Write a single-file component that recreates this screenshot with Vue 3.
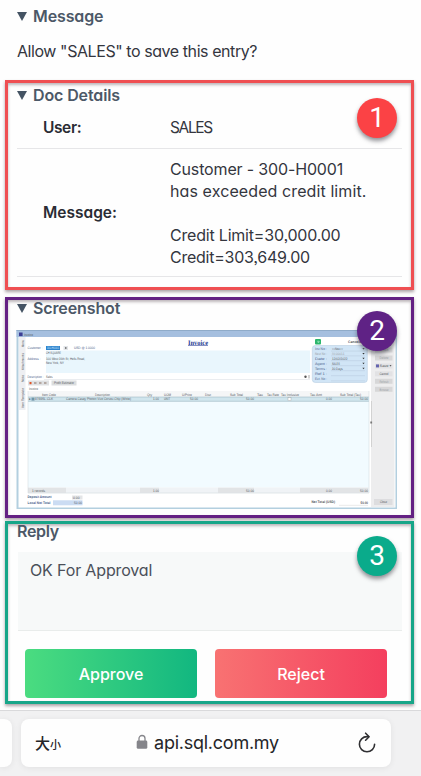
<script setup>
const docLines = [
  { text: 'Customer - 300-H0001', cls: 'l1' },
  { text: 'has exceeded credit limit.', cls: 'l2' },
  { text: '\u00a0', cls: '' },
  { text: 'Credit Limit=30,000.00', cls: 'l3' },
  { text: 'Credit=303,649.00', cls: 'l4' },
]
const fields = [
  { label: 'Inv No :', value: '<<New>>', y: 350.2 },
  { label: 'Next No :', value: 'IV-00011', y: 355, dim: true },
  { label: 'Date :', value: '12/02/2022', y: 359.8 },
  { label: 'Agent :', value: 'SALES', y: 364.8 },
  { label: 'Terms :', value: '30 Days', y: 369.8 },
  { label: 'Ref 1 :', value: '', y: 374.8 },
  { label: 'Ext. No :', value: '', y: 380 },
]
// Every label of the invoice window: t = text, x/y = baseline start, w = width, c = class
const labels = [
  { t: 'Invoice', x: 24, y: 336, w: 9 },
  { t: '300-H0001', x: 47, y: 349.3, w: 12, c: 'lit' },
  { t: 'Customer :', x: 27.5, y: 349.4, w: 15, c: 'blue' },
  { t: 'USD @ 1.0000', x: 74, y: 349.4, w: 21, c: 'blue' },
  { t: 'CH SQUARE', x: 46, y: 354.4, w: 15 },
  { t: 'Address :', x: 27.5, y: 359.5, w: 13, c: 'blue' },
  { t: '100 West 36th St, Hells Road,', x: 46, y: 359.6, w: 39 },
  { t: 'New York, NY', x: 46, y: 364.2, w: 18 },
  { t: 'Description :', x: 27.5, y: 378.2, w: 16, c: 'blue' },
  { t: 'Sales', x: 46, y: 378.2, w: 6.5 },
  { t: 'Profit Estimator', x: 54, y: 384.3, w: 20 },
  { t: 'Invoice', x: 29, y: 389.6, w: 9 },
  { t: 'Item Code', x: 42, y: 395.6, w: 14 },
  { t: 'Description', x: 95, y: 395.6, w: 15 },
  { t: 'Qty', x: 147, y: 395.6, w: 5 },
  { t: 'UOM', x: 164, y: 395.6, w: 7 },
  { t: 'U/Price', x: 182, y: 395.6, w: 10 },
  { t: 'Disc', x: 205, y: 395.6, w: 6 },
  { t: 'Sub Total', x: 230, y: 395.6, w: 13 },
  { t: 'Tax', x: 257, y: 395.6, w: 6 },
  { t: 'Tax Rate', x: 267, y: 395.6, w: 12 },
  { t: 'Tax Inclusive', x: 281, y: 395.6, w: 18 },
  { t: 'Tax Amt', x: 310, y: 395.6, w: 12 },
  { t: 'Sub Total (Tax)', x: 340, y: 395.6, w: 21 },
  { t: '▸', x: 29, y: 400.3, w: 2 },
  { t: '8789SL-CLK', x: 35, y: 400.3, w: 18 },
  { t: 'Camera Casey Photon Vivo Corvex Chip (White)', x: 66, y: 400.3, w: 65 },
  { t: '1.00', x: 153, y: 400.3, w: 6 },
  { t: 'UNIT', x: 164, y: 400.3, w: 6 },
  { t: '50.00', x: 190, y: 400.3, w: 8 },
  { t: '50.00', x: 246, y: 400.3, w: 8 },
  { t: '0.00', x: 326, y: 400.3, w: 6 },
  { t: '50.00', x: 360, y: 400.3, w: 8 },
  { t: '1 records', x: 32, y: 491.5, w: 13 },
  { t: '1.00', x: 153, y: 491.5, w: 6 },
  { t: '50.00', x: 246, y: 491.5, w: 8 },
  { t: '0.00', x: 326, y: 491.5, w: 6 },
  { t: '50.00', x: 360, y: 491.5, w: 8 },
  { t: 'Deposit Amount', x: 27.5, y: 498.3, w: 24, c: 'blue strong' },
  { t: 'Local Net Total', x: 27.5, y: 503.6, w: 23, c: 'blue strong' },
  { t: '0.00', x: 73, y: 498.9, w: 6.5 },
  { t: '50.00', x: 74, y: 504.2, w: 8 },
  { t: 'Net Total (USD)', x: 311.5, y: 503.2, w: 23.5, c: 'strong' },
  { t: '50.00', x: 360.5, y: 504, w: 7.5, c: 'strong' },
  { t: 'Close', x: 380, y: 503.3, w: 7 },
  { t: 'Cancelled', x: 348, y: 343, w: 16, c: 'strong' },
]
const tabs = [
  { t: 'Menu', y: 347, w: 7 }, { t: 'Attachments', y: 370, w: 17 },
  { t: 'Note', y: 382, w: 7 }, { t: 'Item Template', y: 408, w: 20 },
]
const buttons = [
  { t: 'Edit', y: 347.5, dim: true }, { t: 'Delete', y: 355.5, dim: true },
  { t: 'Save', y: 363.5 }, { t: 'Cancel', y: 371.3 },
  { t: 'Refresh', y: 378.8, dim: true }, { t: 'Browse', y: 386.8, dim: true },
]
</script>

<template>
  <main class="page">
    <section class="intro">
      <h2 class="heading"><i class="caret"></i><span>Message</span></h2>
      <p class="question">Allow "SALES" to save this entry?</p>
    </section>

    <section class="frame red">
      <h2 class="heading"><i class="caret"></i><span>Doc Details</span></h2>
      <div class="row user">
        <b class="k-user">User:</b><span class="v-user">SALES</span>
      </div>
      <div class="row message">
        <b class="k-msg">Message:</b>
        <div><p v-for="(l, i) in docLines" :key="i"><span :class="l.cls">{{ l.text }}</span></p></div>
      </div>
      <span class="badge">1</span>
    </section>

    <section class="frame purple">
      <h2 class="heading"><i class="caret"></i><span>Screenshot</span></h2>
      <svg class="shot" viewBox="16 330 382 180" width="382" height="180">
        <rect x="16.5" y="330" width="380.5" height="179" fill="#b3cfdf" />
        <rect x="18.5" y="337" width="377" height="170.5" fill="#fff" />
        <rect x="16.5" y="330" width="380.5" height="7" fill="#a5bfdf" />
        <rect x="16.5" y="330" width="380.5" height="1" fill="#8fabc9" />
        <rect x="19" y="332.5" width="3.6" height="3.6" fill="#3d3f95" />
        <rect x="19" y="337" width="6.5" height="73" fill="#eeeff2" />
        <text v-for="t in tabs" :key="t.t" :transform="`translate(23.5 ${t.y}) rotate(-90)`" :textLength="t.w" lengthAdjust="spacingAndGlyphs">{{ t.t }}</text>
        <text class="title" x="188" y="344.7" textLength="20" lengthAdjust="spacingAndGlyphs">Invoice</text>
        <rect x="188" y="345.4" width="20" height=".6" fill="#34469b" />

        <rect x="46" y="350.5" width="264" height="22.5" fill="#e9f6fd" />
        <rect x="46" y="346" width="14" height="4" fill="#2d83cd" />
        <rect x="63.5" y="346" width="4.5" height="4" fill="#e2e5e9" />
        <rect x="65" y="347.4" width="1.5" height="1.2" fill="#444" />
        <path d="M44 379.5H310" stroke="#d7dbe0" stroke-width=".5" />
        <circle cx="305.5" cy="376.8" r="1.2" fill="#555" />
        <rect x="308" y="375" width="2" height="3.5" fill="#d3d3d3" />

        <rect x="28" y="380.5" width="21" height="5" fill="#dfe1e3" />
        <rect x="29.5" y="382" width="2" height="2.2" fill="#e05528" />
        <path d="M34 383h2.5m2.5 0h2.5m2.5 0h2.5" stroke="#a7958d" stroke-width="1.6" />
        <rect x="51.5" y="380.5" width="25" height="5" fill="#dcdedf" />

        <rect x="28" y="391" width="341" height="6" fill="#f5f6f7" />
        <rect x="28" y="401" width="341" height="86.5" fill="#f2fbff" />
        <rect x="28" y="397" width="341" height="4.4" fill="#d0e5ed" />
        <path d="M28 397H369M28 401.3H369" stroke="#93aeb9" stroke-width=".5" />
        <rect x="31.5" y="397.6" width="3" height="3" fill="#7196a9" />
        <rect x="288" y="397.7" width="3" height="3" fill="#fff" stroke="#999" stroke-width=".4" />

        <rect x="28" y="487.5" width="341" height="5.7" fill="#f0f3f6" />
        <path d="M28 490.3H66M140 490.3H159M218 490.3H254M300 490.3H368" stroke="#e2e4e6" stroke-width="5" />
        <path d="M28 391V493H369V391" fill="none" stroke="#cdd4da" stroke-width=".5" />
        <rect x="72" y="495.5" width="10.5" height="4" fill="#e4e5e7" />
        <rect x="53" y="500.3" width="29.5" height="5" fill="#cbdcf3" />
        <path d="M339 505.3H368" stroke="#d2d2d2" stroke-width=".5" />

        <rect x="371" y="337" width="23.5" height="170" fill="#ededee" />
        <path d="M371.5 401V447" stroke="#d2d2d2" stroke-width="1" />
        <rect x="370.3" y="421.5" width="1.8" height="2" fill="#777" />
        <g v-for="b in buttons" :key="b.t">
          <rect x="375" :y="b.y" width="17.5" height="5" :fill="b.dim ? '#d7d7d8' : '#e2e2e4'" />
          <text x="379.5" :y="b.y + 3.7" textLength="9" :class="{ faint: b.dim }" lengthAdjust="spacingAndGlyphs">{{ b.t }}</text>
        </g>
        <rect x="376" y="364.4" width="3" height="3" fill="#6464ae" />
        <path d="M389.5 365.2h2l-1 1.4z" fill="#333" />
        <rect x="374" y="499" width="18.5" height="6" fill="#dddddf" />

        <rect x="315" y="339" width="6" height="5.6" rx="1" fill="#2db66d" />
        <path d="M317 341.8h2.2m-1-1.2 1.1 1.2-1.1 1.2" stroke="#d8ffe9" stroke-width=".5" fill="none" />
        <rect x="312.3" y="345.5" width="55" height="37" rx="3" fill="#d1e5f6" stroke="#b9cfe2" stroke-width=".6" />
        <g v-for="f in fields" :key="f.label">
          <path :d="`M331 ${f.y + .9}H365`" stroke="#adc3d7" stroke-width=".4" />
          <text class="blue" :class="{ faint: f.dim }" x="315" :y="f.y" textLength="12" lengthAdjust="spacingAndGlyphs">{{ f.label }}</text>
          <text v-if="f.value" :class="{ faint: f.dim }" x="332" :y="f.y" :textLength="f.value.length * 1.55" lengthAdjust="spacingAndGlyphs">{{ f.value }}</text>
          <path v-if="f.value" :d="`M362.4 ${f.y - 2}h2.2l-1.1 1.4z`" fill="#333" />
        </g>
        <text v-for="(l, i) in labels" :key="i" :class="l.c" :x="l.x" :y="l.y" :textLength="l.w" lengthAdjust="spacingAndGlyphs">{{ l.t }}</text>
      </svg>
      <span class="badge">2</span>
    </section>

    <section class="frame green">
      <h2 class="heading reply"><span>Reply</span></h2>
      <div class="answer"><span>OK For Approval</span></div>
      <div class="actions">
        <button class="approve"><span>Approve</span></button>
        <button class="reject"><span>Reject</span></button>
      </div>
      <span class="badge">3</span>
    </section>

    <footer class="bar">
      <div class="stub"></div>
      <div class="pill">
        <span class="size">大<small>小</small></span>
        <span class="host">
          <svg width="12" height="16" viewBox="0 0 12 16">
            <path d="M3 7V4.5a3 3 0 0 1 6 0V7" fill="none" stroke="#85858a" stroke-width="1.3" />
            <rect x=".7" y="6.6" width="10.6" height="8.2" rx="1.4" fill="#85858a" />
          </svg>
          <span>api.sql.com.my</span>
        </span>
        <svg width="20" height="22" viewBox="0 0 20 22">
          <path d="M11.4 4.6H10A7.6 7.6 0 1 0 17.6 12.2" fill="none" stroke="#303033" stroke-width="1.6" stroke-linecap="round" />
          <path d="M8.6 1.2 12.1 4.7 8.6 8.2" fill="none" stroke="#303033" stroke-width="1.6" stroke-linecap="round" stroke-linejoin="round" />
        </svg>
      </div>
    </footer>
  </main>
</template>

<style>
body { margin: 0; background: #fefefe; }
</style>

<style scoped>
.page {
  box-sizing: border-box;
  height: 776px;
  width: 421px;
  overflow: hidden;
  display: flex;
  flex-direction: column;
  font-family: Inter, "Noto Sans", sans-serif;
  font-feature-settings: "cv11", "ss03";
  font-size: 16px;
  line-height: 22px;
  color: #34363e;
  background: #fefefe;
}
p, h2 { margin: 0; }
span { white-space: nowrap; }
.intro { height: 76px; padding: 5px 0 0 16px; }
.heading { display: flex; align-items: center; height: 22px; font-size: 16px; font-weight: 600; color: #4c5867; letter-spacing: -.12px; }
.caret { width: 0; border: 5px solid transparent; border-top: 9px solid #445363; border-bottom: 0; margin: 0 6.5px 0 .5px; }
.question { margin-top: 13px; padding-left: 1px; letter-spacing: -.43px; }
.frame { position: relative; box-sizing: border-box; width: 409px; margin-left: 5px; border: 3px solid; flex: none; box-shadow: 0 2px 3px rgba(70, 50, 60, .45), inset 0 2px 3px rgba(70, 50, 60, .35); }
.frame .heading { padding-left: 8px; }
.red { height: 210px; border-color: #ef4f52; padding-top: 1px; }
.purple { height: 221px; border-color: #642083; margin-top: 7px; }
.green { height: 183px; border-color: #18a689; margin-top: 3px; }
.row { box-sizing: border-box; display: grid; grid-template-columns: 127px 1fr; align-items: center; margin: 0 9px; padding-left: 26px; border-bottom: 1px solid #e6e6e8; }
.row b { font-weight: 600; font-size: 15.5px; color: #2a2c34; }
.row .k-user { letter-spacing: -.4px; }
.row .k-msg { letter-spacing: 0; }
.v-user { font-size: 15.5px; letter-spacing: -1.35px; }
.l1 { letter-spacing: -.15px; }
.l2 { letter-spacing: .1px; }
.l3 { letter-spacing: -.2px; }
.l4 { letter-spacing: -.25px; }
.user { height: 43px; padding-top: 2px; }
.message { height: 128px; }
.purple .heading { margin-top: -3px; }
.shot { display: block; margin: 11px 0 0 8px; letter-spacing: 0; }
.shot text { font-family: "Liberation Sans", sans-serif; font-size: 3.5px; fill: #53585e; text-rendering: geometricPrecision; }
.shot .blue { fill: #4b628b; }
.shot .lit { fill: #cfe8ff; }
.shot .faint { fill: #9a9fa6; }
.shot .strong { font-weight: 700; }
.shot .title { font-family: "Liberation Serif", serif; font-weight: 700; font-size: 7px; fill: #24388f; }
.badge { position: absolute; right: 14px; width: 40px; height: 40px; border-radius: 50%; color: #fff; font: 28px/40px Roboto, Arial, sans-serif; text-align: center; box-shadow: 0 3px 4px rgba(40, 40, 50, .5); }
.red .badge { top: 15px; background: #fb4245; }
.purple .badge { top: 11px; background: #5f2285; }
.green .badge { top: 12px; background: #0aab8b; }
.green .reply { margin-top: -4px; padding-left: 9px; letter-spacing: -.3px; }
.answer { box-sizing: border-box; height: 79px; margin: 10px 9px 0 10px; padding: 7px 12px; background: #f7f9f9; border-bottom: 1px solid #e9eceb; color: #4b5059; letter-spacing: -.15px; }
.actions { display: grid; grid-template-columns: 172px 172px; gap: 18px; margin: 18px 0 0 17px; }
.actions button { height: 49px; border: 0; border-radius: 4px; padding: 0; color: #fff; font: 500 16px/22px Inter, sans-serif; font-feature-settings: "cv11"; }
.approve { background: linear-gradient(90deg, #4bdc80, #12b780); }
.reject { background: linear-gradient(90deg, #f87272, #f43f5e); }
.bar { margin-top: 6px; height: 66px; box-sizing: border-box; border-top: 1px solid #d9d9db; background: #f1f1f2; display: flex; gap: 9px; padding-top: 8px; flex: none; }
.stub { width: 12px; height: 48px; background: #fefefe; border-radius: 0 8px 8px 0; box-shadow: 0 1px 6px rgba(0, 0, 0, .07); }
.pill { box-sizing: border-box; width: 370px; height: 48px; background: #fefefe; border-radius: 8px; box-shadow: 0 1px 6px rgba(0, 0, 0, .07); display: flex; align-items: center; justify-content: space-between; padding: 0 14px; color: #252528; }
.size { font: 500 15px/22px "Noto Sans CJK SC", sans-serif; }
.size small { font-size: 11px; }
.host { display: flex; align-items: center; gap: 6px; margin-right: 3px; font: 18px/22px Inter, sans-serif; font-feature-settings: normal; letter-spacing: -.25px; }
.host svg { position: relative; top: -1px; }
</style>
